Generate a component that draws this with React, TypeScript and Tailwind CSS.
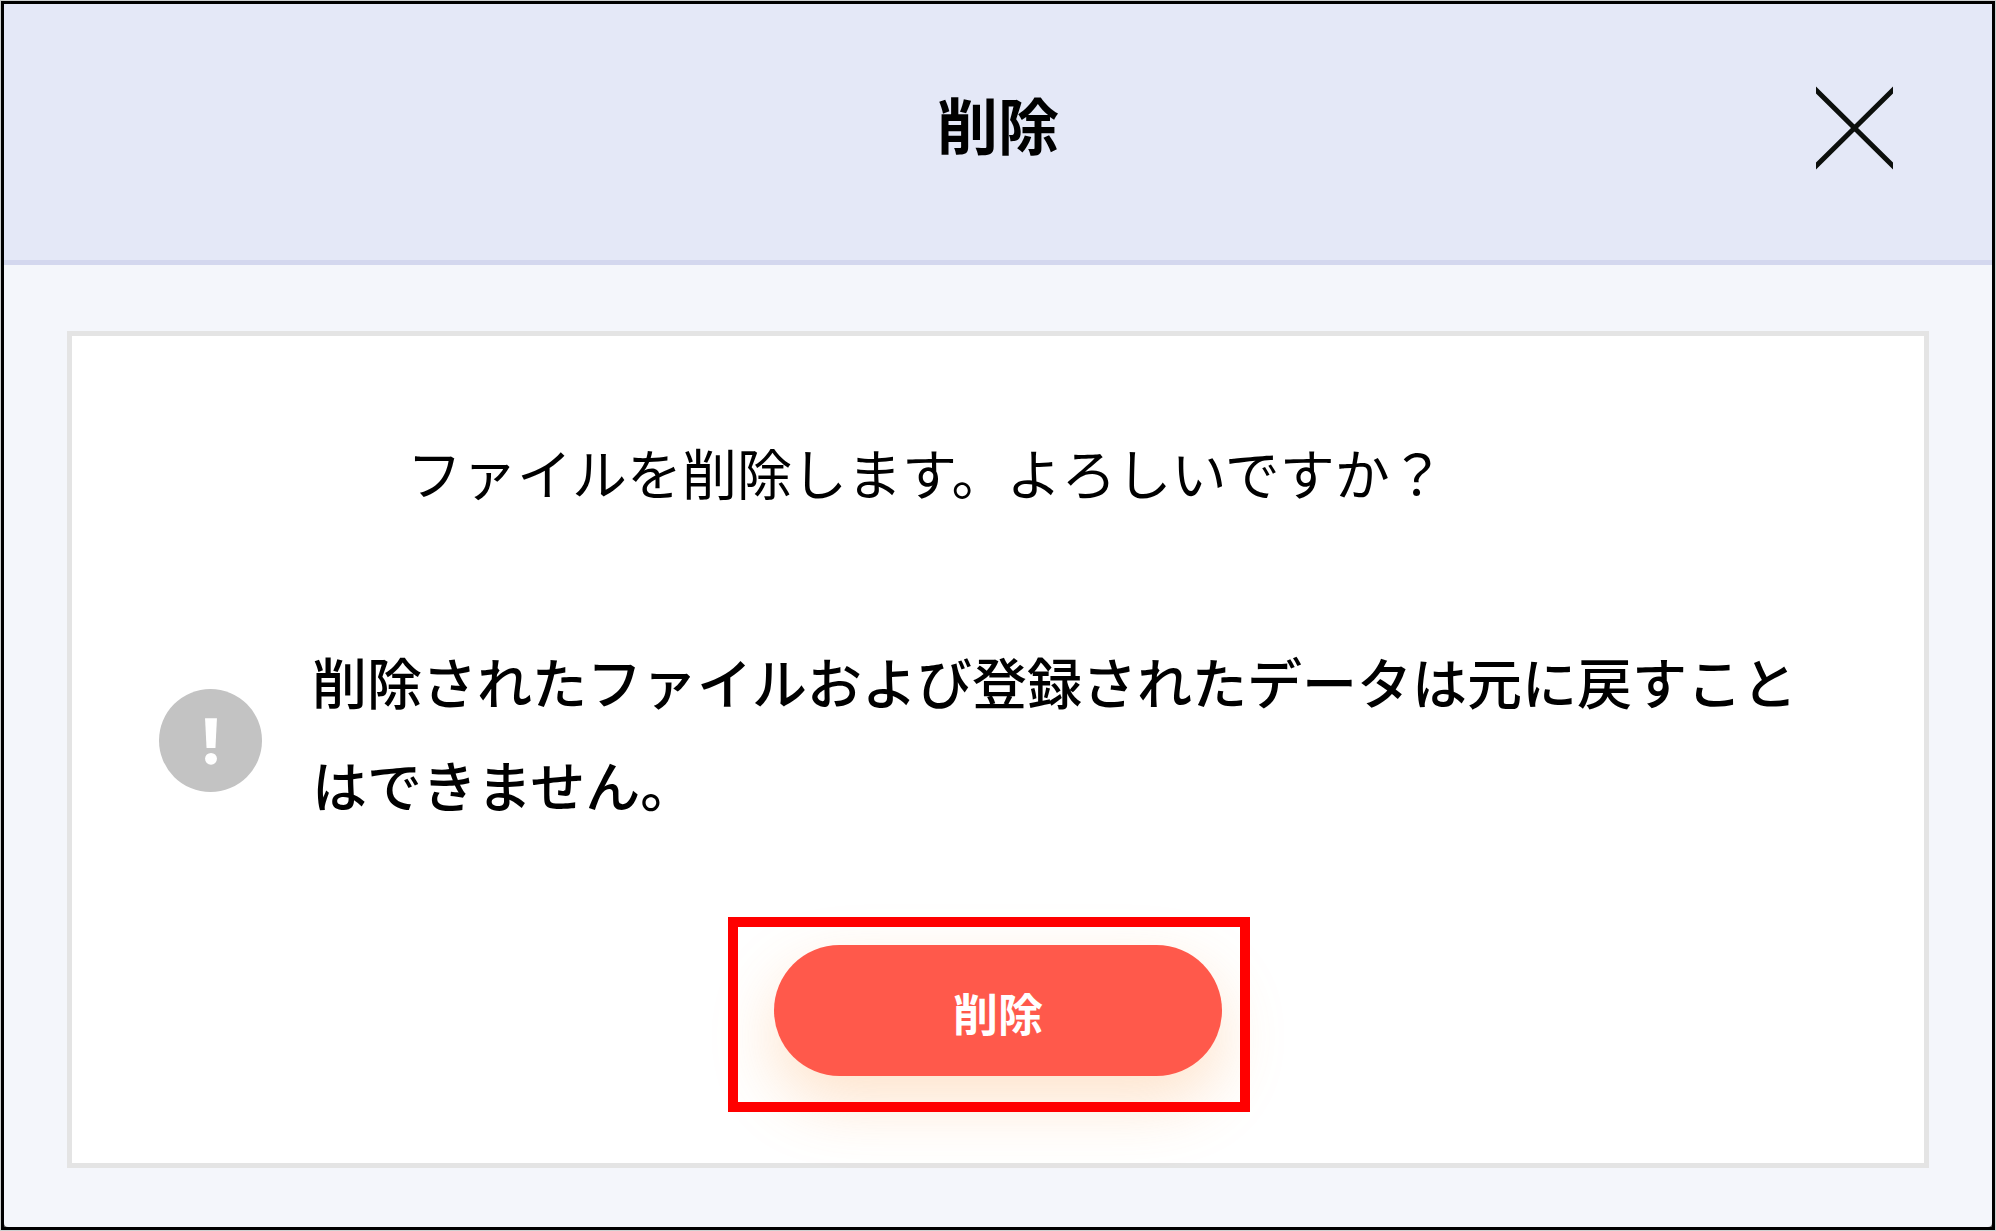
export default function App() {
  return (
    <div className="flex min-h-screen bg-[#cdd0d0] p-px font-['Noto_Sans_CJK_JP',sans-serif] text-black">
      <div
        role="dialog"
        aria-labelledby="title"
        className="flex grow flex-col border-3 border-black bg-[#555]"
      >
        <header className="grid grid-cols-[1fr_auto_1fr] items-center border-b-5 border-[#d3d7ee] bg-[#e4e8f7] px-[99px] pt-16 pb-18">
          <h1 id="title" className="col-start-2 pb-2 text-[61px] leading-[112px] font-bold">削除</h1>
          <button type="button" aria-label="閉じる" className="justify-self-end">
            <svg width="77" height="84" viewBox="0 0 77 84" fill="none" stroke="#0c0f0c" strokeWidth="5">
              <path d="M-2 2 79 82M79 2-2 82" />
            </svg>
          </button>
        </header>
        <main className="flex grow flex-col rounded-b-sm bg-[#f4f6fb] px-[63px] pt-[66px] pb-[59px]">
          <section className="flex grow flex-col border-5 border-[#e4e4e4] bg-white px-[87px] pt-[85px]">
            <p className="pl-62 text-[55px] leading-[100px]">ファイルを削除します。よろしいですか？</p>
            <div className="mt-27 flex items-center gap-[50px]">
              <svg className="mt-4 size-[103px] shrink-0" viewBox="0 0 104 104" aria-hidden="true">
                <circle cx="52" cy="52" r="52" fill="#c3c3c3" />
                <path d="M46.500 29.500h12l-1.500 30h-9z" fill="#fff" />
                <circle cx="52.500" cy="70.500" r="6" fill="#fff" />
              </svg>
              <p className="grow text-[55px] leading-[103px] font-medium">
                削除されたファイルおよび登録されたデータは元に戻すことはできません。
              </p>
            </div>
            <div className="relative mx-auto mt-[110px]">
              <button
                type="button"
                className="block h-[131px] w-112 rounded-full bg-[#ff594b] pt-1 text-[45px] font-bold text-white shadow-[0_26px_64px_rgba(250,155,70,0.28)]"
              >
                削除
              </button>
              <span
                aria-hidden="true"
                className="pointer-events-none absolute -top-7 -right-7 -bottom-9 -left-[46px] border-10 border-[#ff0000]"
              />
            </div>
          </section>
        </main>
      </div>
    </div>
  );
}
